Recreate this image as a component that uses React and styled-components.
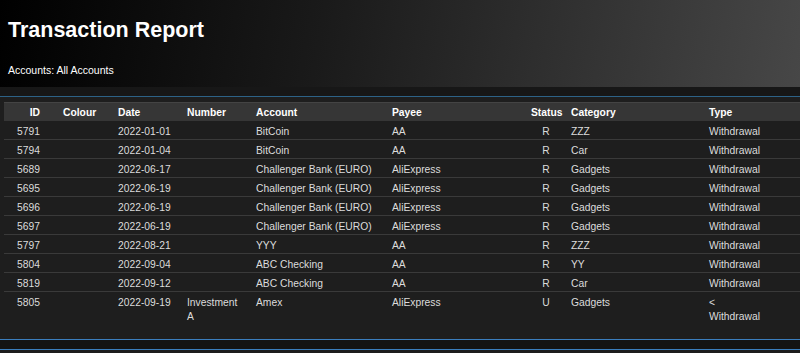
import React from "react";
import styled, { createGlobalStyle } from "styled-components";

const Global = createGlobalStyle`
  html, body { margin: 0; padding: 0; background: #1c1c1c; }
  body { font-family: "Liberation Sans", Arial, Helvetica, sans-serif; color: #ddd; overflow: hidden; }
`;

const Page = styled.div`
  width: 800px;
  height: 353px;
  overflow: hidden;
  background: #1c1c1c;
`;

const Banner = styled.header`
  height: 87px;
  box-sizing: border-box;
  padding: 16px 8px 0;
  background: linear-gradient(100deg, #000 0%, #1a1a1a 40%, #474747 100%);
  color: #fff;
`;

const Title = styled.h1`
  margin: 0;
  font-size: 21.5px;
  line-height: 28px;
  font-weight: bold;
`;

const Sub = styled.div`
  margin-top: 19px;
  font-size: 10.5px;
  line-height: 14px;
`;

const Gap = styled.div`
  height: 9px;
  background: #171717;
`;

const Panel = styled.section`
  background: #1e1e1e;
  border-top: 1px solid #2d6287;
  border-bottom: 1px solid #3b7ebd;
  padding: 5px 0 15px 4px;
`;

const Table = styled.table`
  width: 796px;
  border-collapse: collapse;
  table-layout: fixed;
  font-size: 10.3px;
  line-height: 14px;
`;

const HeadRow = styled.tr`
  background: #363636;
  border-top: 1px solid #444;
`;

const Th = styled.th`
  color: #fff;
  font-weight: bold;
  padding: 3px 5px 1px 5px;
  text-align: ${(p) => p.$align || "left"};
  padding-right: ${(p) => (p.$align === "right" ? "18px" : "5px")};
  white-space: nowrap;
`;

const Row = styled.tr`
  border-bottom: 1px solid #3a3a3a;
  &:last-child { border-bottom: none; }
`;

const Td = styled.td`
  color: #dcdcdc;
  padding: 4px 5px 0 5px;
  vertical-align: top;
  text-align: ${(p) => p.$align || "left"};
  padding-right: ${(p) => (p.$align === "right" ? "18px" : "5px")};
`;

const Arrow = styled.span`
  display: block;
`;

const Footer = styled.div`
  height: 9px;
  background: #141414;
  border-bottom: 1px solid #3b7ebd;
`;

const cols = [
  { key: "id", label: "ID", w: 54, align: "right" },
  { key: "colour", label: "Colour", w: 55 },
  { key: "date", label: "Date", w: 69 },
  { key: "number", label: "Number", w: 69 },
  { key: "account", label: "Account", w: 136 },
  { key: "payee", label: "Payee", w: 139 },
  { key: "status", label: "Status", w: 40, align: "center" },
  { key: "category", label: "Category", w: 138 },
  { key: "type", label: "Type", w: 96 },
];

const rows = [
  ["5791", "", "2022-01-01", "", "BitCoin", "AA", "R", "ZZZ", "Withdrawal"],
  ["5794", "", "2022-01-04", "", "BitCoin", "AA", "R", "Car", "Withdrawal"],
  ["5689", "", "2022-06-17", "", "Challenger Bank (EURO)", "AliExpress", "R", "Gadgets", "Withdrawal"],
  ["5695", "", "2022-06-19", "", "Challenger Bank (EURO)", "AliExpress", "R", "Gadgets", "Withdrawal"],
  ["5696", "", "2022-06-19", "", "Challenger Bank (EURO)", "AliExpress", "R", "Gadgets", "Withdrawal"],
  ["5697", "", "2022-06-19", "", "Challenger Bank (EURO)", "AliExpress", "R", "Gadgets", "Withdrawal"],
  ["5797", "", "2022-08-21", "", "YYY", "AA", "R", "ZZZ", "Withdrawal"],
  ["5804", "", "2022-09-04", "", "ABC Checking", "AA", "R", "YY", "Withdrawal"],
  ["5819", "", "2022-09-12", "", "ABC Checking", "AA", "R", "Car", "Withdrawal"],
  ["5805", "", "2022-09-19", "Investment A", "Amex", "AliExpress", "U", "Gadgets", "split"],
];

export default function App() {
  return (
    <Page>
      <Global />
      <Banner>
        <Title>Transaction Report</Title>
        <Sub>Accounts: All Accounts</Sub>
      </Banner>
      <Gap />
      <Panel>
        <Table>
          <colgroup>
            {cols.map((c) => (
              <col key={c.key} style={{ width: c.w }} />
            ))}
          </colgroup>
          <thead>
            <HeadRow>
              {cols.map((c) => (
                <Th key={c.key} $align={c.align}>
                  {c.label}
                </Th>
              ))}
            </HeadRow>
          </thead>
          <tbody>
            {rows.map((r, i) => (
              <Row key={i}>
                {r.map((v, j) => (
                  <Td key={j} $align={cols[j].align}>
                    {v === "split" ? (
                      <>
                        <Arrow>&lt;</Arrow>
                        Withdrawal
                      </>
                    ) : (
                      v
                    )}
                  </Td>
                ))}
              </Row>
            ))}
          </tbody>
        </Table>
      </Panel>
      <Footer />
    </Page>
  );
}
